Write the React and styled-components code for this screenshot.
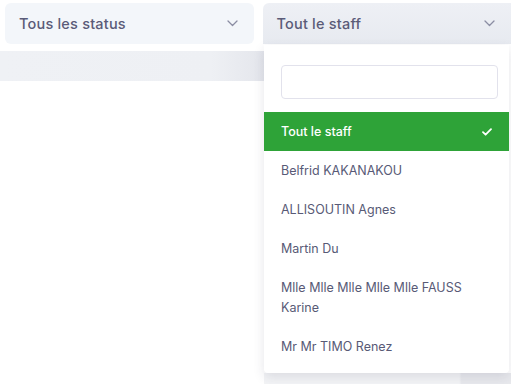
import React from 'react';
import styled, { createGlobalStyle } from 'styled-components';

const GlobalStyle = createGlobalStyle`
    html, body {
        margin: 0;
        padding: 0;
        background: #fff;
        font-family: 'Inter', 'Noto Sans', sans-serif;
    }
`;

const Page = styled.div`
    position: relative;
    width: 511px;
    height: 384px;
    overflow: hidden;
    padding-top: 3px;
    box-sizing: border-box;
`;

const FilterRow = styled.div`
    display: flex;
    gap: 9px;
    padding-left: 5px;
`;

const Select = styled.div`
    display: flex;
    align-items: center;
    justify-content: space-between;
    box-sizing: border-box;
    width: ${p => p.width}px;
    height: 41px;
    padding: 0 16px 0 14px;
    border-radius: ${p => (p.open ? '6px 0 0 0' : '6px')};
    background: ${p => (p.open ? 'linear-gradient(180deg, #eef0f5 0%, #e7eaf0 100%)' : '#f3f6fa')};
    color: #5a5b78;
    font-size: 14.5px;
    letter-spacing: 0.2px;
    font-weight: 500;
`;

const Band = styled.div`
    margin-top: 7px;
    height: 30px;
    width: 264px;
    background: linear-gradient(90deg, #eff1f5 0%, #eef0f4 80%, #e4e6ec 100%);
`;

const Dropdown = styled.div`
    position: absolute;
    top: 45px;
    left: 264px;
    width: 245px;
    height: 328px;
    box-sizing: border-box;
    padding-top: 20px;
    background: #fff;
    box-shadow: 0 4px 12px rgba(40, 45, 70, 0.12);
    border-radius: 0 0 4px 4px;
`;

const SearchBox = styled.input`
    display: block;
    box-sizing: border-box;
    width: 217px;
    height: 34px;
    margin: 0 0 13px 17px;
    border: 1px solid #e2e2ec;
    border-radius: 4px;
    outline: none;
`;

const Option = styled.div`
    display: flex;
    align-items: center;
    justify-content: space-between;
    padding: 10px 17px 9px 17px;
    line-height: 20px;
    font-size: 12.5px;
    font-weight: ${p => (p.selected ? 500 : 400)};
    color: ${p => (p.selected ? '#fff' : '#585a76')};
    background: ${p => (p.selected ? '#2ea338' : 'transparent')};
`;

const BottomStrip = styled.div`
    position: absolute;
    left: 264px;
    right: 0;
    bottom: 0;
    height: 11px;
    background: linear-gradient(90deg, #f3f4f6 0%, #f3f4f6 79%, #e8e9ed 80%, #e8e9ed 100%);
`;

const Chevron = () => (
    <svg width="11" height="7" viewBox="0 0 11 7" fill="none">
        <path d="M1 1l4.5 4.5L10 1" stroke="#8b8da3" strokeWidth="1.3" strokeLinecap="round" strokeLinejoin="round" />
    </svg>
);

const Check = () => (
    <svg width="10" height="8" viewBox="0 0 10 8" fill="none">
        <path d="M1 4.2l2.6 2.5L9 1.2" stroke="#fff" strokeWidth="1.8" strokeLinecap="round" strokeLinejoin="round" />
    </svg>
);

const staff = [
    'Belfrid KAKANAKOU',
    'ALLISOUTIN Agnes',
    'Martin Du',
    'Mlle Mlle Mlle Mlle Mlle FAUSS Karine',
    'Mr Mr TIMO Renez',
];

export default function App() {
    return (
        <Page>
            <GlobalStyle />
            <FilterRow>
                <Select width={250}>
                    <span>Tous les status</span>
                    <Chevron />
                </Select>
                <Select width={250} open>
                    <span>Tout le staff</span>
                    <Chevron />
                </Select>
            </FilterRow>
            <Band />
            <BottomStrip />
            <Dropdown>
                <SearchBox type="text" />
                <Option selected>
                    <span>Tout le staff</span>
                    <Check />
                </Option>
                {staff.map(name => (
                    <Option key={name}>
                        <span>{name}</span>
                    </Option>
                ))}
            </Dropdown>
        </Page>
    );
}
